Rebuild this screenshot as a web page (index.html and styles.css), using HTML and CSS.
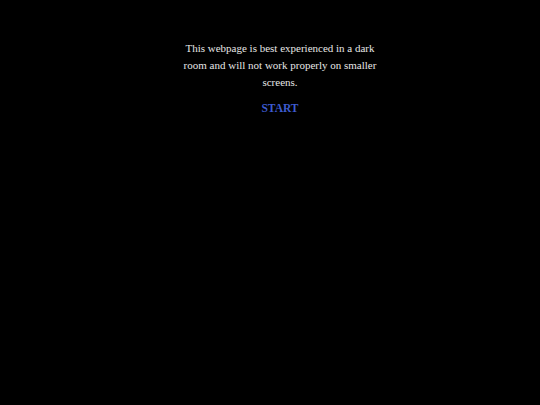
FILE: index.html
```html
<!DOCTYPE html>
<html>
<head>
<meta charset="utf-8">
<link rel="stylesheet" href="styles.css">
</head>
<body>
<div class="intro">
  <p class="notice">This webpage is best experienced in a dark room and will not work properly on smaller screens.</p>
  <a class="start" href="#">START</a>
</div>
</body>
</html>
```
FILE: styles.css
```css
html, body {
  margin: 0;
  background: #000;
}
body {
  padding: 40px 0 0 20px;
  font-family: "Liberation Serif", "Times New Roman", serif;
}
.intro {
  width: 200px;
  margin: 0 auto;
  text-align: center;
}
.notice {
  margin: 0;
  color: #e6e6e6;
  font-size: 11px;
  line-height: 17px;
}
.start {
  display: inline-block;
  margin-top: 9px;
  color: #3d5bd0;
  font-size: 11.5px;
  font-weight: bold;
  line-height: 17px;
  text-decoration: none;
}
```
